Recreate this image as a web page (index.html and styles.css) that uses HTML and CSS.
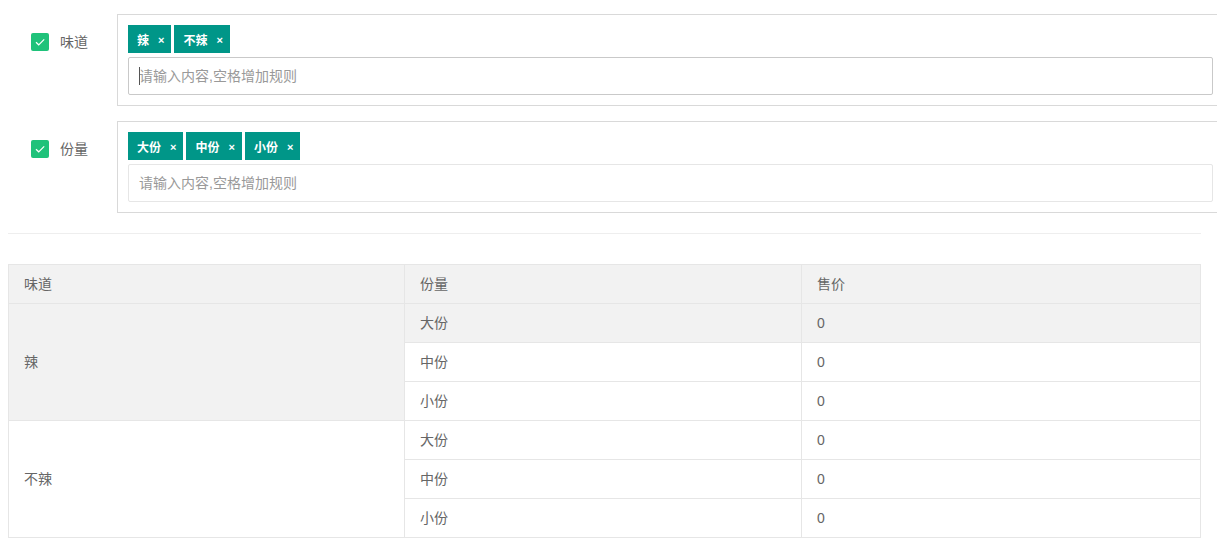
FILE: index.html
```html
<!DOCTYPE html>
<html lang="zh-CN">

<head>
    <meta charset="UTF-8">
    <meta name="viewport" content="width=device-width, initial-scale=1.0">
    <title>规格设置</title>
    <link rel="stylesheet" href="styles.css">
</head>

<body>
    <div class="page">
        <div class="spec-form">
            <div class="form-item">
                <label class="item-label">
                    <span class="check">
                        <svg viewBox="0 0 18 18" width="18" height="18"><path d="M5 9.2l2.7 2.6L13.2 6.3" fill="none" stroke="#fff" stroke-width="1.2"/></svg>
                    </span>
                    <span>味道</span>
                </label>
                <div class="tag-box">
                    <div class="tags">
                        <span class="tag">辣<i class="close">×</i></span>
                        <span class="tag">不辣<i class="close">×</i></span>
                    </div>
                    <div class="input-wrap focused">
                        <input class="tag-input" type="text" placeholder="请输入内容,空格增加规则">
                    </div>
                </div>
            </div>

            <div class="form-item">
                <label class="item-label">
                    <span class="check">
                        <svg viewBox="0 0 18 18" width="18" height="18"><path d="M5 9.2l2.7 2.6L13.2 6.3" fill="none" stroke="#fff" stroke-width="1.2"/></svg>
                    </span>
                    <span>份量</span>
                </label>
                <div class="tag-box">
                    <div class="tags">
                        <span class="tag">大份<i class="close">×</i></span>
                        <span class="tag">中份<i class="close">×</i></span>
                        <span class="tag">小份<i class="close">×</i></span>
                    </div>
                    <div class="input-wrap">
                        <input class="tag-input" type="text" placeholder="请输入内容,空格增加规则">
                    </div>
                </div>
            </div>
        </div>

        <hr class="divider">

        <table class="sku-table">
            <colgroup>
                <col class="col-taste">
                <col class="col-size">
                <col>
            </colgroup>
            <thead>
                <tr>
                    <th>味道</th>
                    <th>份量</th>
                    <th>售价</th>
                </tr>
            </thead>
            <tbody>
                <tr class="row-hover">
                    <td rowspan="3">辣</td>
                    <td>大份</td>
                    <td>0</td>
                </tr>
                <tr>
                    <td>中份</td>
                    <td>0</td>
                </tr>
                <tr>
                    <td>小份</td>
                    <td>0</td>
                </tr>
                <tr>
                    <td rowspan="3">不辣</td>
                    <td>大份</td>
                    <td>0</td>
                </tr>
                <tr>
                    <td>中份</td>
                    <td>0</td>
                </tr>
                <tr>
                    <td>小份</td>
                    <td>0</td>
                </tr>
            </tbody>
        </table>
    </div>
</body>

</html>
```

FILE: styles.css
```css
body {
    margin: 0;
    overflow: hidden;
    background-color: #fff;
    color: #666;
    font-family: 'Helvetica Neue', 'Liberation Sans', 'Noto Sans CJK SC', sans-serif;
    font-size: 14px;
}

.page {
    width: 1193px;
    padding: 14px 0 0 8px;
}

/* Spec form */
.form-item {
    display: flex;
    margin-bottom: 15px;
}

.item-label {
    flex: 0 0 109px;
    box-sizing: border-box;
    display: flex;
    align-items: center;
    align-self: flex-start;
    gap: 11px;
    padding: 18px 0 0 23px;
    line-height: 20px;
}

.check {
    width: 18px;
    height: 18px;
    border-radius: 2px;
    background-color: #1fc27a;
    display: block;
}

.check svg {
    display: block;
}

.tag-box {
    flex: 0 0 1107px;
    box-sizing: border-box;
    border: 1px solid #d9d9d9;
    padding: 10px;
}

.tags {
    display: flex;
    gap: 3px;
    margin-bottom: 4px;
}

.tag {
    display: flex;
    align-items: center;
    height: 28px;
    padding: 0 7px 0 9px;
    background-color: #009688;
    color: #fff;
    font-size: 12px;
    font-weight: bold;
}

.tag .close {
    font-style: normal;
    font-size: 11px;
    margin-left: 9px;
    line-height: 1;
    padding-top: 2px;
}

.input-wrap {
    position: relative;
}

.tag-input {
    display: block;
    width: 1085px;
    height: 38px;
    box-sizing: border-box;
    border: 1px solid #e6e6e6;
    border-radius: 2px;
    padding: 0 10px;
    font-family: inherit;
    font-size: 14px;
    color: #666;
    outline: none;
}

.tag-input::placeholder {
    color: #999;
}

.input-wrap.focused .tag-input {
    border-color: #c9c9c9;
}

/* text caret in the focused input */
.input-wrap.focused::before {
    content: '';
    position: absolute;
    left: 11px;
    top: 10px;
    width: 1px;
    height: 18px;
    background-color: #555;
}

.divider {
    margin: 20px 0 30px;
    border: none;
    border-top: 1px solid #eee;
    height: 0;
}

/* Sku table */
.sku-table {
    width: 1193px;
    border-collapse: collapse;
    table-layout: fixed;
}

.col-taste {
    width: 396px;
}

.col-size {
    width: 397px;
}

.sku-table th,
.sku-table td {
    border: 1px solid #e6e6e6;
    padding: 9px 15px;
    line-height: 20px;
    text-align: left;
    font-weight: normal;
    color: #666;
}

.sku-table thead th {
    background-color: #f2f2f2;
}

.sku-table .row-hover td {
    background-color: #f2f2f2;
}
```
